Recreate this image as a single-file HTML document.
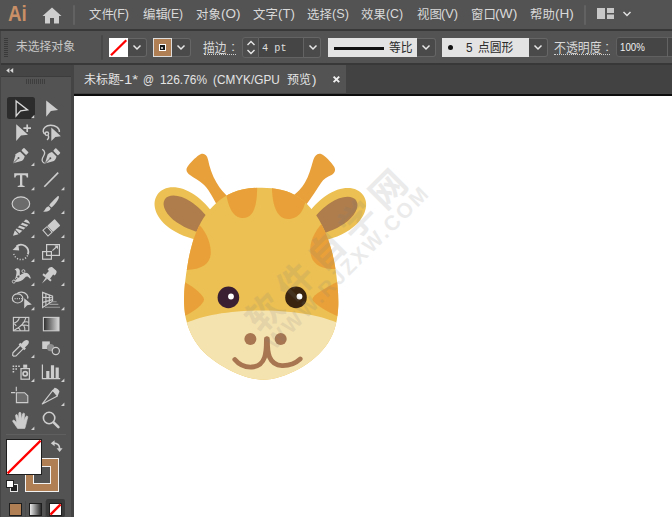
<!DOCTYPE html>
<html lang="zh"><head><meta charset="utf-8"><title>Adobe Illustrator</title>
<style>
html,body{margin:0;padding:0;background:#fff;}
body{width:672px;height:517px;overflow:hidden;position:relative;font-family:"Liberation Sans",sans-serif;}
#app{position:absolute;left:0;top:0;width:672px;height:517px;overflow:hidden;background:#fff;}
#app div,#app span,#app svg{position:absolute;}
.t{white-space:pre;}
.g{overflow:visible;}
.g text{font-family:"Liberation Sans","Noto Sans CJK SC",sans-serif;}
.bar{background:#535353;}
.dark{background:#383838;}
.dd{background:#4a4a4a;border:1px solid #666;border-left:none;border-radius:0 3px 3px 0;box-sizing:border-box;}
</style></head>
<body>
<div id="app">
 <!-- canvas -->
 <div style="left:74px;top:95.8px;width:598px;height:422px;background:#fff"></div>
 <!-- menu bar -->
 <div class="bar" style="left:0;top:0;width:672px;height:30px"></div>
 <div class="dark" style="left:0;top:29px;width:672px;height:2px"></div>
 <!-- control bar -->
 <div class="bar" style="left:0;top:31px;width:672px;height:32px"></div>
 <div class="dark" style="left:0;top:63px;width:672px;height:2px"></div>
 <!-- tab bar -->
 <div style="left:72px;top:65px;width:600px;height:28px;background:#424242"></div>
 <div class="bar" style="left:74px;top:65px;width:272px;height:28px"></div>
 <div class="dark" style="left:72px;top:93px;width:600px;height:1.5px;background:#444"></div><div class="dark" style="left:74px;top:94.4px;width:598px;height:1.5px;background:#0c0c0c"></div>
 <!-- toolbar -->
 <div class="bar" style="left:0;top:65px;width:71px;height:452px"></div>
 <div style="left:0;top:65px;width:71px;height:11px;background:#454545"></div>
 <div class="dark" style="left:0;top:76px;width:71px;height:1px;background:#3c3c3c"></div>
 <div class="dark" style="left:71px;top:65px;width:3px;height:452px;background:#444"></div>
 <div class="dark" style="left:0;top:31px;width:1px;height:486px;background:#444"></div>

 <!-- Ai logo + home -->
 <span class="t" style="left:8.2px;top:1.8px;font-size:21.4px;line-height:24.6px;color:#c98f66;font-weight:bold;transform:scaleX(.88);transform-origin:0 0">Ai</span>
 <svg style="left:42px;top:7px" width="20" height="17" viewBox="0 0 20 17"><path fill="#cecece" d="M10 0.5 L19.5 9 L17 9 L17 16.5 L12 16.5 L12 11 L8 11 L8 16.5 L3 16.5 L3 9 L0.5 9 Z"/></svg>
 <div style="left:73.2px;top:4.8px;width:2px;height:20px;background:#626262;border-radius:1px"></div>
 <div style="left:584px;top:4.8px;width:2px;height:20px;background:#626262;border-radius:1px"></div>
 <!-- workspace switcher -->
 <svg style="left:597px;top:8px" width="36" height="12" viewBox="0 0 36 12"><path fill="#c8c8c8" d="M0 0h8v11h-8zM10 0h7v5h-7zM10 6.5h7v4.5h-7z"/><path fill="none" stroke="#e0e0e0" stroke-width="1.5" d="M26.5 4 L30 7.5 L33.5 4"/></svg>

 <!-- control bar widgets -->
 <svg style="left:4px;top:37px" width="5" height="22" viewBox="0 0 5 22"><path stroke="#3a3a3a" stroke-width="1" d="M0 1.5h4M0 3.5h4M0 5.5h4M0 7.5h4M0 9.5h4M0 11.5h4M0 13.5h4M0 15.5h4M0 17.5h4M0 19.5h4"/></svg>
 <div style="left:101px;top:35px;width:2px;height:24.6px;background:#484848;border-radius:1px"></div>
 <!-- fill swatch -->
 <div style="left:108.9px;top:38px;width:19.1px;height:19px;background:#fff"></div>
 <svg style="left:109px;top:38px" width="19" height="19" viewBox="0 0 19 19"><path stroke="#f00" stroke-width="2.3" d="M2 17.3 L17.3 2.2"/></svg>
 <div class="dd" style="left:128px;top:38px;width:19px;height:19px"></div>
 <svg style="left:132px;top:44px" width="10" height="7" viewBox="0 0 10 7"><path fill="none" stroke="#e8e8e8" stroke-width="1.5" d="M1.5 1.5 L5 5 L8.5 1.5"/></svg>
 <!-- stroke swatch -->
 <div style="left:153px;top:38px;width:19px;height:19px;background:#b07f54;border:1px solid #ddd;box-sizing:border-box"></div>
 <div style="left:159px;top:44.4px;width:6.6px;height:6.6px;background:#1a1a1a;border:1.1px solid #fff;box-sizing:border-box"></div><div style="left:161.3px;top:46.7px;width:2px;height:2px;background:#bbb"></div>
 <div class="dd" style="left:172px;top:38px;width:19px;height:19px"></div>
 <svg style="left:176px;top:44px" width="10" height="7" viewBox="0 0 10 7"><path fill="none" stroke="#e8e8e8" stroke-width="1.5" d="M1.5 1.5 L5 5 L8.5 1.5"/></svg>
 <!-- stroke label underline -->
 <div style="left:203.5px;top:53.6px;width:32px;height:0;border-top:1px dotted #d0d0d0"></div>
 <!-- spinner -->
 <div style="left:241.6px;top:37px;width:17.6px;height:20.5px;border:1px solid #636363;border-radius:3px 0 0 3px;box-sizing:border-box;background:#4d4d4d"></div>
 <svg style="left:245.6px;top:40px" width="10" height="15" viewBox="0 0 10 15"><path fill="none" stroke="#e8e8e8" stroke-width="1.4" d="M1.5 5 L5 1.5 L8.5 5M1.5 10 L5 13.5 L8.5 10"/></svg>
 <div style="left:259.2px;top:37px;width:44.8px;height:20.5px;background:#454545;border:1px solid #636363;border-left:none;box-sizing:border-box"></div>
 <div class="dd" style="left:304px;top:37px;width:17px;height:20.5px"></div>
 <svg style="left:308px;top:44px" width="10" height="7" viewBox="0 0 10 7"><path fill="none" stroke="#e8e8e8" stroke-width="1.5" d="M1.5 1.5 L5 5 L8.5 1.5"/></svg>
 <!-- stroke profile -->
 <div style="left:328px;top:38px;width:89px;height:19px;background:#e3e3e3"></div>
 <div style="left:333.8px;top:47px;width:50.6px;height:2.6px;background:#111"></div>
 <div class="dd" style="left:417px;top:38px;width:19px;height:19px"></div>
 <svg style="left:421px;top:44px" width="10" height="7" viewBox="0 0 10 7"><path fill="none" stroke="#e8e8e8" stroke-width="1.5" d="M1.5 1.5 L5 5 L8.5 1.5"/></svg>
 <!-- brush -->
 <div style="left:442px;top:38px;width:87px;height:19px;background:#e3e3e3"></div>
 <div style="left:448px;top:45px;width:5px;height:5px;border-radius:50%;background:#111"></div>
 <div class="dd" style="left:529px;top:38px;width:19px;height:19px"></div>
 <svg style="left:533px;top:44px" width="10" height="7" viewBox="0 0 10 7"><path fill="none" stroke="#e8e8e8" stroke-width="1.5" d="M1.5 1.5 L5 5 L8.5 1.5"/></svg>
 <!-- opacity -->
 <div style="left:554px;top:53.6px;width:56px;height:0;border-top:1px dotted #d0d0d0"></div>
 <div style="left:616.2px;top:37px;width:60px;height:20.4px;background:#454545;border:1px solid #606060;border-radius:3px;box-sizing:border-box"></div>
 <div style="left:667px;top:38px;width:1px;height:19px;background:#636363"></div>

 <!-- tab close -->
 <svg style="left:332px;top:75px" width="9" height="9" viewBox="0 0 9 9"><path stroke="#f0f0f0" stroke-width="1.9" d="M1.6 1.6 L7.2 7.2 M7.2 1.6 L1.6 7.2"/></svg>

 <!-- toolbar header -->
 <svg style="left:6px;top:67px" width="8" height="7" viewBox="0 0 8 7"><path fill="#d8d8d8" d="M3.4 1 L3.4 6 L0.2 3.5Z M7.2 1 L7.2 6 L4 3.5Z"/></svg>
 <svg style="left:26px;top:79px" width="20" height="6" viewBox="0 0 20 6"><path stroke="#3e3e3e" stroke-width="1" d="M0.5 0v5M2.5 0v5M4.5 0v5M6.5 0v5M8.5 0v5M10.5 0v5M12.5 0v5M14.5 0v5M16.5 0v5M18.5 0v5"/></svg>

 <svg style="left:0;top:65px" width="71" height="452" viewBox="0 65 71 452">
  <defs>
   <linearGradient id="gr1" x1="0" x2="1" y1="0" y2="0"><stop offset="0" stop-color="#2b2b2b"/><stop offset="1" stop-color="#dcdcdc"/></linearGradient>
   <linearGradient id="gr2" x1="0" x2="1" y1="0" y2="0"><stop offset="0" stop-color="#f4f4f4"/><stop offset="1" stop-color="#222"/></linearGradient>
   <path id="ct" d="M3.4 0 L3.4 3.4 L0 3.4Z" fill="#cfcfcf"/>
  </defs>
  <g fill="#cdcdcd" stroke="none">
  <!-- row1 -->
  <rect x="7" y="97" width="28" height="22" rx="2.5" fill="#2c2c2c"/>
  <path d="M16.1 100.9 L27.6 109.9 L20.6 110.9 L16.1 116 Z" fill="none" stroke="#dadada" stroke-width="1.3" stroke-linejoin="miter"/>
  <use href="#ct" x="31" y="114.8"/>
  <path d="M46.2 100.4 L58.1 110 L50.9 111 L46.2 116.7Z"/>
  <!-- row2 -->
  <path d="M16.2 124.3 L28 134.8 L21 135.6 L16.2 141Z"/>
  <path d="M27.2 124.4 v7.6 M23.4 128.2 h7.6" stroke="#cdcdcd" stroke-width="1.7" fill="none"/>
  <g fill="none" stroke="#cdcdcd" stroke-width="1.4">
   <path d="M59.4 132 C59.8 128 55.6 125.2 50.6 125.2 C45.8 125.2 42.8 128.4 43.2 131.4 C43.4 132.8 44.2 133.6 45.2 133.8"/>
   <circle cx="46.9" cy="133.7" r="1.7"/>
   <path d="M48 135.2 C49 137 48.6 138.8 47 139.8"/>
  </g>
  <path d="M51.3 127.4 L60.9 136.2 L55.4 136.9 L51.3 141Z"/>
  <!-- row3 pens -->
  <g id="pen" transform="translate(13.2 163.3) rotate(45) scale(0.99)">
   <path d="M0 0 L-4.6 -8.2 C-4.9 -10.5 -3.6 -12.6 -3.2 -13.2 L3.2 -13.2 C3.6 -12.6 4.9 -10.5 4.6 -8.2Z"/>
   <path d="M0 -0.5 L0 -7" stroke="#535353" stroke-width="0.9"/>
   <circle cx="0" cy="-7.6" r="1.0" fill="#535353"/>
   <rect x="-3.4" y="-18.8" width="6.8" height="3.8" rx="0.8"/>
  </g>
  <use href="#ct" x="31" y="162.6"/>
  <use href="#pen" x="0" y="0" transform="translate(31.8 0.3)"/>
  <path d="M42.2 149.2 C45 151 45.2 153.5 43.6 156 C41.6 159 41.2 162 44.6 163.4" fill="none" stroke="#cdcdcd" stroke-width="1.3"/>
  <!-- row4 T, line -->
  <path d="M14.2 173.2 H28.1 V177.6 H26.7 C26.5 176 26 175.3 24.6 175.3 H22.3 V184.6 C22.3 185.6 22.9 185.9 24.6 185.9 V187 H17.7 V185.9 C19.4 185.9 20 185.6 20 184.6 V175.3 H17.7 C16.3 175.3 15.8 176 15.6 177.6 H14.2Z"/>
  <use href="#ct" x="31" y="186.8"/>
  <path d="M44.3 186.8 L58.2 172.6" stroke="#cdcdcd" stroke-width="1.6" fill="none"/>
  <use href="#ct" x="61" y="186.8"/>
  <!-- row5 ellipse, brush -->
  <ellipse cx="20.9" cy="203.8" rx="8.8" ry="6.9" fill="#6c6c6c" stroke="#d2d2d2" stroke-width="1.1"/>
  <use href="#ct" x="31" y="210.6"/>
  <path d="M58.6 196 C59.6 197 58.4 199.6 56.4 202.2 C54.6 204.6 52.6 206.8 51.4 207.6 L49.2 205.4 C50 204 52 201.8 54.2 199.6 C56.4 197.4 57.8 195.4 58.6 196Z"/>
  <path d="M48.6 206.2 L50.6 208.2 C50.4 210.6 48 211.9 43 211.6 C45.2 210.4 45.4 207.2 48.6 206.2Z"/>
  <use href="#ct" x="61" y="210.6"/>
  <!-- row6 pencil, eraser -->
  <g transform="translate(13 235.8) rotate(-44)">
   <path d="M0 0 L5.2 -2.7 L5.2 2.7Z"/>
   <path d="M6.2 -2.8 L20.4 -2.8 C21.6 -2.8 21.8 2.8 20.4 2.8 L6.2 2.8Z"/>
   <path d="M8.2 -3.2 L11.2 3.2 M12.4 -3.2 L15.4 3.2 M16.6 -3.2 L19.6 3.2" stroke="#535353" stroke-width="1.5" fill="none"/>
  </g>
  <use href="#ct" x="31" y="234.6"/>
  <g transform="translate(51.6 227.6) rotate(-42) scale(0.86)">
   <rect x="-2.2" y="-5" width="11.4" height="10" rx="0.8"/>
   <rect x="-9.6" y="-4.4" width="6.4" height="8.8" fill="none" stroke="#cdcdcd" stroke-width="1.2"/>
  </g>
  <use href="#ct" x="61" y="234.6"/>
  <!-- row7 rotate, scale -->
  <path d="M16.4 246.4 A7.3 7.3 0 0 1 27.9 254.4" fill="none" stroke="#cdcdcd" stroke-width="1.8"/>
  <path d="M27.6 255.4 A7.3 7.3 0 0 1 13.8 253.6" fill="none" stroke="#cdcdcd" stroke-width="1.5" stroke-dasharray="1.1 1.7"/>
  <path d="M12.6 249.9 L18.2 244.4 L19.2 250.6Z"/>
  <use href="#ct" x="31" y="258.6"/>
  <g fill="none" stroke="#cdcdcd" stroke-width="1.2">
   <rect x="46.6" y="244.6" width="12.8" height="10.8"/>
   <rect x="42.6" y="251.6" width="8.8" height="7.6"/>
   <path d="M52.4 250.6 L57.2 246.2"/>
  </g>
  <path d="M54.4 245.6 H58 V249.2Z"/>
  <use href="#ct" x="61" y="258.6"/>
  <!-- row8 width, pin -->
  <path d="M13.6 282 C15.2 279.6 16 276.6 16.4 273.4 C16.8 270.6 15.8 269.4 14.4 270.2 C17 266.6 20.6 268.6 19.8 272.4 C19.4 274.6 20.6 275.2 22.6 273.8 C25.6 271.8 29.2 272.6 30.6 277.6 C30.8 278.6 30.2 279 29.6 278.2 C27.8 276 26.2 276.2 24.6 278 C22.4 280.6 18.6 282.4 13.6 282Z"/>
  <path d="M13.6 281.8 L23.4 271.2" stroke="#535353" stroke-width="1" fill="none"/>
  <circle cx="13.8" cy="281.6" r="1.5" fill="#535353" stroke="#cdcdcd" stroke-width="0.9"/>
  <circle cx="18.4" cy="276.6" r="1.5" fill="#535353" stroke="#cdcdcd" stroke-width="0.9"/>
  <circle cx="23.4" cy="271.2" r="1.5" fill="#535353" stroke="#cdcdcd" stroke-width="0.9"/>
  <use href="#ct" x="31" y="282.6"/>
  <g transform="translate(41.9 283.6) rotate(-50)">
   <path d="M0 0 L7.2 -1 L7.2 1Z"/>
   <path d="M7 -5.2 L9 -5.2 L9 -3 L14.2 -2.8 L14.4 -4.6 C17.4 -5 19.2 -3.6 19.2 -2.4 L19.2 2.4 C19.2 3.6 17.4 5 14.4 4.6 L14.2 2.8 L9 3 L9 5.2 L7 5.2Z"/>
  </g>
  <use href="#ct" x="61" y="282.6"/>
  <!-- row9 shape builder, perspective -->
  <g fill="none" stroke="#cdcdcd" stroke-width="1.2">
   <ellipse cx="17.6" cy="298.4" rx="5.2" ry="4.6"/>
   <path d="M17 293.6 C19 291.6 24.4 291.4 26.8 294.6 C28 296.2 28 297.6 27.6 298.6"/>
   <path d="M14.6 298.6 H22.6" stroke-dasharray="1 1.2"/>
  </g>
  <path d="M24.2 298.2 L31.8 304.6 L27.2 305.2 L24.2 308.6Z"/>
  <use href="#ct" x="31" y="306.8"/>
  <g fill="none" stroke="#cdcdcd" stroke-width="1.1">
   <path d="M42.6 292.4 V307.4 L52.6 301.2 L52.6 296.2Z"/>
   <path d="M45.9 293.7 V305.3 M49.3 295 V303.2 M42.6 297.4 L52.6 297.8 M42.6 302.4 L52.6 299.6"/>
  </g>
  <path d="M52 301.8 H56.6 M49.4 304.4 H58.4 M45 307.2 H60" stroke="#9a9a9a" stroke-width="1.1" fill="none"/>
  <use href="#ct" x="61" y="306.8"/>
  <!-- row10 mesh, gradient -->
  <g fill="none" stroke="#cdcdcd" stroke-width="1.1">
   <rect x="13.4" y="317.4" width="15.4" height="13.4"/>
   <path d="M13.4 323.4 C16.5 322.6 18.8 320.4 19.4 317.4 M13.6 330.4 C19 328 24.5 323.5 26 317.4 M20 325.8 C23 324.6 26 324.8 28.8 326 M17.8 327.4 C19.4 328.4 20.2 329.6 20.4 330.8 M22.8 322.8 C24.6 321.8 27 321.6 28.8 322.2 M23.6 325.2 C24.8 327 25 329 24.8 330.8 M16.2 326 C15.6 324.8 14.6 324 13.4 323.8"/>
  </g>
  <rect x="43.4" y="317.4" width="15.6" height="13.4" fill="url(#gr1)" stroke="#cdcdcd" stroke-width="1.1"/>
  <!-- row11 eyedropper, blend -->
  <g transform="translate(12.8 356) rotate(-45)">
   <path d="M0.4 -0.6 L2.4 -2.2 L13.4 -2.2 L13.4 2.2 L2.4 2.2 L0.4 0.6Z" fill="#535353" stroke="#cdcdcd" stroke-width="1.2" stroke-linejoin="round"/>
   <path d="M12.2 -4 H14.6 V-2.6 H16.4 C19.2 -3.2 21.8 -2 21.8 0 C21.8 2 19.2 3.2 16.4 2.6 H14.6 V4 H12.2Z"/>
  </g>
  <use href="#ct" x="31" y="354.6"/>
  <rect x="42.2" y="341.4" width="7.6" height="7.6"/>
  <circle cx="50.6" cy="347.6" r="3.7" fill="#8c8c8c"/>
  <circle cx="55.8" cy="351" r="3.6" fill="#535353" stroke="#cdcdcd" stroke-width="1.2"/>
  <!-- row12 symbol sprayer, graph -->
  <rect x="21" y="368.6" width="8.4" height="10.6" fill="none" stroke="#cdcdcd" stroke-width="1.2"/>
  <circle cx="25.2" cy="373.8" r="3"/><circle cx="25.2" cy="373.8" r="1.3" fill="#535353"/>
  <rect x="23.2" y="364.6" width="4" height="3.2"/>
  <path d="M12.6 365.4 h1.6 v1.6 h-1.6z M15.4 365.4 h1.6 v1.6 h-1.6z M18.2 365.4 h1.6 v1.6 h-1.6z M12.6 368.2 h1.6 v1.6 h-1.6z M15.4 368.2 h1.6 v1.6 h-1.6z M12.6 371 h1.6 v1.6 h-1.6z"/>
  <use href="#ct" x="31" y="378.6"/>
  <path d="M42.4 364.4 V378.6 H60.2" fill="none" stroke="#cdcdcd" stroke-width="1.2"/>
  <path d="M46.2 371 h3.2 v7 h-3.2z M50.9 365.2 h3.2 v12.8 h-3.2z M55.6 367.4 h3.2 v10.6 h-3.2z"/>
  <use href="#ct" x="61" y="378.6"/>
  <!-- row13 artboard, slice -->
  <path d="M16.4 392.7 H24.6 L27.8 395.8 V402.6 H16.4Z" fill="#6c6c6c" stroke="#cdcdcd" stroke-width="1.1"/>
  <path d="M16.3 386.8 V391.2 M11 392.6 H15.3" stroke="#cdcdcd" stroke-width="1.1" fill="none"/>
  <path d="M42.3 403.9 L52.8 390.4 L57.4 396Z" fill="none" stroke="#cdcdcd" stroke-width="1.1" stroke-linejoin="round"/>
  <path d="M52.4 390.4 L54.6 387.8 C55.6 387 60 390.4 59.4 391.8 L57.6 396.2Z"/>
  <use href="#ct" x="61" y="402.6"/>
  <!-- row14 hand, zoom -->
  <path d="M17.6 428.4 C15.8 426 14.2 423.4 12.8 421.6 C12.2 420.4 13.6 419.6 14.6 420.6 L16.8 423 L15.6 415.8 C15.4 414.4 17.2 414 17.6 415.4 L18.8 419.6 L18.8 413.4 C18.8 412 20.8 412 20.9 413.4 L21.3 419.4 L22.6 414 C23 412.6 24.8 413 24.6 414.4 L23.9 420.2 L25.9 416.6 C26.6 415.4 28.2 416.2 27.7 417.6 C26.8 420.4 26.2 424 24.8 428.4Z" stroke="#cdcdcd" stroke-width="0.7" stroke-linejoin="round"/>
  <use href="#ct" x="31" y="426.6"/>
  <circle cx="49.1" cy="418" r="5.7" fill="none" stroke="#cdcdcd" stroke-width="1.6"/>
  <path d="M53.6 422.4 L58.4 427.2" stroke="#cdcdcd" stroke-width="2.6" stroke-linecap="round" fill="none"/>
  </g>
  <!-- separator -->
  <path d="M6 434.5 H66" stroke="#5f5f5f" stroke-width="1"/>
  <!-- fill / stroke swatches -->
  <rect x="25.5" y="458.5" width="33" height="33" fill="#b07f54" stroke="#f2f2f2" stroke-width="1"/>
  <rect x="33.5" y="466.5" width="17" height="17" fill="#535353" stroke="#f2f2f2" stroke-width="1"/>
  <rect x="6.5" y="439.5" width="35" height="35" fill="#fff" stroke="#1e1e1e" stroke-width="1"/>
  <path d="M7.6 473.4 L40.6 440.6" stroke="#f00" stroke-width="2.2"/>
  <!-- swap arrow -->
  <path d="M53.2 443.2 C57.6 443 59.8 445.4 59.6 449" fill="none" stroke="#cdcdcd" stroke-width="1.7"/>
  <path d="M50.8 443.2 L54.6 440.2 V446.2Z M59.6 452 L56.6 448.2 H62.6Z" fill="#cdcdcd"/>
  <!-- default fill/stroke -->
  <rect x="10.5" y="484.5" width="7" height="7" fill="#222" stroke="#e8e8e8" stroke-width="1"/>
  <rect x="6.5" y="480.5" width="7" height="7" fill="#fff" stroke="#222" stroke-width="1"/>
  <!-- bottom buttons -->
  <rect x="46" y="499" width="19" height="18" rx="2" fill="#3a3a3a"/>
  <path d="M25.5 501 V517 M45.5 501 V517" stroke="#4a4a4a" stroke-width="1"/>
  <rect x="9.5" y="503.5" width="12" height="12" fill="#b07f54" stroke="#1e1e1e"/>
  <rect x="29.5" y="503.5" width="12" height="12" fill="url(#gr2)" stroke="#1e1e1e"/>
  <rect x="49.5" y="503.5" width="12" height="12" fill="#fff" stroke="#1e1e1e"/>
  <path d="M50.4 514.6 L60.6 504.4" stroke="#f00" stroke-width="2.4"/>
 </svg>

 <svg style="left:74px;top:95px" width="598" height="422" viewBox="74 95 598 422">
  <defs><clipPath id="hd"><path id="hp" d="M262.0 187.7 C268.7 187.8 275.4 188.3 281.8 189.9 C288.1 191.4 294.1 193.9 299.4 197.7 C304.8 201.4 309.5 206.2 313.5 211.5 C317.5 216.8 320.9 222.7 323.7 228.7 C326.5 234.7 328.8 240.8 330.6 247.1 C332.5 253.3 333.9 259.6 335.0 266.0 C336.1 272.4 336.9 278.9 337.5 285.6 C338.1 292.2 338.5 299.0 338.3 305.7 C338.0 312.3 337.3 318.9 335.7 325.1 C334.1 331.4 331.6 337.3 328.1 342.8 C324.6 348.2 320.1 353.2 315.1 357.6 C310.1 362.0 304.5 365.9 298.7 369.1 C292.8 372.3 286.7 374.9 280.4 376.8 C274.1 378.8 267.6 380.0 261.2 379.7 C254.8 379.4 248.4 377.8 242.1 375.6 C235.9 373.3 229.9 370.5 224.1 367.1 C218.3 363.8 212.8 360.1 207.8 355.8 C202.9 351.5 198.5 346.5 195.0 340.9 C191.5 335.3 188.8 329.1 187.0 322.9 C185.2 316.6 184.4 310.2 184.1 303.7 C183.8 297.2 184.2 290.5 184.9 283.9 C185.6 277.3 186.5 270.7 187.7 264.2 C188.8 257.6 190.1 251.2 191.9 244.9 C193.6 238.6 195.8 232.5 198.7 226.7 C201.6 220.8 205.1 215.1 209.4 210.0 C213.7 204.9 218.6 200.4 224.2 196.9 C229.7 193.4 235.8 191.1 242.2 189.6 C248.6 188.2 255.3 187.7 262.0 187.7Z"/></clipPath></defs>
  <!-- horns -->
  <path fill="#e8a03a" d="M222 214 L217 205 C212 196 208 188 203 184 C199 180.5 194 178 190 175 C186 172 185.5 169 188 166 C192 161 197 156 200.5 154.3 C204 152.8 207 155 208 159.5 C209.5 167 212 175 216.6 182.7 C220 188.5 224 193 229 198 L236 206Z"/>
  <path fill="#e8a03a" d="M284 206 L290 198 C297 193 302 188 305 182.5 C309 175.5 311 168 313 161 C314.5 156 317 153 320.5 153.8 C325 155.5 331 162 334 166.5 C336 170 335 173 331.5 175 C327 177 323.5 179 321 183 C317 189 312 197 306 205 L300 214Z"/>
  <!-- ears -->
  <g transform="translate(187.8 215.4) rotate(34)"><path d="M-36.8 0 C-36.8 -11.8 -24 -20.8 -6 -20.8 C12 -20.8 36.5 -11.6 36.5 0 C36.5 11.6 12 20.8 -6 20.8 C-24 20.8 -36.8 11.8 -36.8 0Z" fill="#ecc052"/><path d="M-28 -0.5 C-28 -7.6 -18 -13 -5 -13 C9 -13 29 -7.6 29 -0.5 C29 6.6 9 12 -5 12 C-18 12 -28 6.6 -28 -0.5Z" fill="#ae7d4b"/></g>
  <g transform="translate(332.9 216.0) scale(-1 1) rotate(34)"><path d="M-36.8 0 C-36.8 -11.8 -24 -20.8 -6 -20.8 C12 -20.8 36.5 -11.6 36.5 0 C36.5 11.6 12 20.8 -6 20.8 C-24 20.8 -36.8 11.8 -36.8 0Z" fill="#ecc052"/><path d="M-28 -0.5 C-28 -7.6 -18 -13 -5 -13 C9 -13 29 -7.6 29 -0.5 C29 6.6 9 12 -5 12 C-18 12 -28 6.6 -28 -0.5Z" transform="translate(0 0.6)" fill="#ae7d4b"/></g>
  <!-- head -->
  <use href="#hp" fill="#ecc052"/>
  <g clip-path="url(#hd)">
   <path fill="#e9a038" d="M225 180 C226 205 232 218 243 218 C254 218 258 205 257 180Z"/>
   <path fill="#e9a038" d="M272 180 C271 205 277 219 288 219 C299 219 306 210 307 190Z"/>
   <path fill="#e9a038" d="M196 222 C205 229 210.5 241 210.8 252 C211 263 203 269.5 186 270 L178 270 L178 222Z"/>
   <path fill="#e9a038" d="M327 219 C317 227 310 239 310.2 250 C310.5 261 317 268 331 269 L346 269 L346 219Z"/>
   <path fill="#e9a038" d="M180 280 C192 285 204 295.5 204 299.5 C204 304 193 313 180 318Z"/>
   <path fill="#e9a038" d="M342 280 C330 285 312.5 295 312.5 299 C312.5 303.5 329 313 342 318Z"/>
   <path fill="#f5e3af" d="M180 325.2 L184 324 C198 317 224 310.5 262 310.4 C300 310.5 326 317 340 324 L344 325.2 L344 385 L180 385Z"/>
  </g>
  <circle cx="228.4" cy="297.4" r="10.8" fill="#3a1e32"/><circle cx="231" cy="296.5" r="2.9" fill="#fff"/>
  <circle cx="296" cy="297.4" r="10.8" fill="#3a2410"/><circle cx="299.5" cy="296.5" r="2.9" fill="#fff"/>
  <circle cx="250.4" cy="339" r="6" fill="#a87650"/><circle cx="280.7" cy="339" r="6" fill="#a87650"/>
  <path fill="none" stroke="#a87650" stroke-width="4.8" stroke-linecap="round" stroke-linejoin="round" d="M266.4 339 C266.4 345 266.6 352 264.5 357.5 C262.5 363 258 366.6 252 367 C245 367.4 239 364.6 234.8 359.5 M267.4 339 C267.4 345 267.3 352 269.5 357 C271.8 362.4 276 365.4 282 365.6 C289 365.8 295.5 363.4 300.2 359"/>
  <!-- watermark -->
  <g transform="translate(261 334.5) rotate(-45)" fill="#808080" opacity="0.15">
   <text x="0" y="0" font-family="Liberation Sans, Noto Sans CJK SC, sans-serif" font-weight="bold" font-size="36" letter-spacing="7.7">软件自学网</text>
   <text x="-1.5" y="21" font-family="Liberation Sans, sans-serif" font-weight="bold" font-size="21" letter-spacing="2.3">WWW.RJZXW.COM</text>
  </g>
 </svg>

<svg class="g" aria-label="文件" style="left:89.25px;top:5.26px" width="26.8" height="17.4" viewBox="0 -13.64 26.8 17.4"><text x="0" y="0" font-size="12.4" fill="#d9d9d9">文件</text></svg>
<span class="t" style="left:113.40px;top:6.35px;font-size:13.2px;line-height:15.17px;color:#d9d9d9;font-family:'Liberation Sans',sans-serif;transform:scaleX(0.9493);transform-origin:0 0">(F)</span>
<svg class="g" aria-label="编辑" style="left:142.64999999999998px;top:5.26px" width="26.8" height="17.4" viewBox="0 -13.64 26.8 17.4"><text x="0" y="0" font-size="12.4" fill="#d9d9d9">编辑</text></svg>
<span class="t" style="left:166.80px;top:6.35px;font-size:13.2px;line-height:15.17px;color:#d9d9d9;font-family:'Liberation Sans',sans-serif;transform:scaleX(0.9150);transform-origin:0 0">(E)</span>
<svg class="g" aria-label="对象" style="left:196.14999999999998px;top:5.26px" width="26.8" height="17.4" viewBox="0 -13.64 26.8 17.4"><text x="0" y="0" font-size="12.4" fill="#d9d9d9">对象</text></svg>
<span class="t" style="left:220.90px;top:6.35px;font-size:13.2px;line-height:15.17px;color:#d9d9d9;font-family:'Liberation Sans',sans-serif;transform:scaleX(1.0231);transform-origin:0 0">(O)</span>
<svg class="g" aria-label="文字" style="left:253.45px;top:5.26px" width="26.8" height="17.4" viewBox="0 -13.64 26.8 17.4"><text x="0" y="0" font-size="12.4" fill="#d9d9d9">文字</text></svg>
<span class="t" style="left:277.70px;top:6.35px;font-size:13.2px;line-height:15.17px;color:#d9d9d9;font-family:'Liberation Sans',sans-serif;transform:scaleX(0.9968);transform-origin:0 0">(T)</span>
<svg class="g" aria-label="选择" style="left:307.25px;top:5.26px" width="26.8" height="17.4" viewBox="0 -13.64 26.8 17.4"><text x="0" y="0" font-size="12.4" fill="#d9d9d9">选择</text></svg>
<span class="t" style="left:331.80px;top:6.35px;font-size:13.2px;line-height:15.17px;color:#d9d9d9;font-family:'Liberation Sans',sans-serif;transform:scaleX(0.9605);transform-origin:0 0">(S)</span>
<svg class="g" aria-label="效果" style="left:361.45px;top:5.26px" width="26.8" height="17.4" viewBox="0 -13.64 26.8 17.4"><text x="0" y="0" font-size="12.4" fill="#d9d9d9">效果</text></svg>
<span class="t" style="left:386.20px;top:6.35px;font-size:13.2px;line-height:15.17px;color:#d9d9d9;font-family:'Liberation Sans',sans-serif;transform:scaleX(0.9387);transform-origin:0 0">(C)</span>
<svg class="g" aria-label="视图" style="left:416.65px;top:5.26px" width="26.8" height="17.4" viewBox="0 -13.64 26.8 17.4"><text x="0" y="0" font-size="12.4" fill="#d9d9d9">视图</text></svg>
<span class="t" style="left:441.00px;top:6.35px;font-size:13.2px;line-height:15.17px;color:#d9d9d9;font-family:'Liberation Sans',sans-serif;transform:scaleX(0.9718);transform-origin:0 0">(V)</span>
<svg class="g" aria-label="窗口" style="left:471.45px;top:5.26px" width="26.8" height="17.4" viewBox="0 -13.64 26.8 17.4"><text x="0" y="0" font-size="12.4" fill="#d9d9d9">窗口</text></svg>
<span class="t" style="left:495.40px;top:6.35px;font-size:13.2px;line-height:15.17px;color:#d9d9d9;font-family:'Liberation Sans',sans-serif;transform:scaleX(1.0494);transform-origin:0 0">(W)</span>
<svg class="g" aria-label="帮助" style="left:530.45px;top:5.26px" width="26.8" height="17.4" viewBox="0 -13.64 26.8 17.4"><text x="0" y="0" font-size="12.4" fill="#d9d9d9">帮助</text></svg>
<span class="t" style="left:554.60px;top:6.35px;font-size:13.2px;line-height:15.17px;color:#d9d9d9;font-family:'Liberation Sans',sans-serif;transform:scaleX(1.0314);transform-origin:0 0">(H)</span>
<svg class="g" aria-label="未选择对象" style="left:15.6px;top:38.32px" width="61.0" height="16.5" viewBox="0 -12.98 61.0 16.5"><text x="0" y="0" font-size="11.8" fill="#c6c6c6" transform="scale(1 1.03)">未选择对象</text></svg>
<svg class="g" aria-label="描边" style="left:203.4px;top:39.02px" width="25.6" height="16.5" viewBox="0 -12.98 25.6 16.5"><text x="0" y="0" font-size="11.8" fill="#d9d9d9" transform="scale(1 1.07)">描边</text></svg>
<span class="t" style="left:230.80px;top:40.23px;font-size:13px;line-height:14.94px;color:#d9d9d9;font-family:'Liberation Sans',sans-serif;transform:scaleX(1.1628);transform-origin:0 0">:</span>
<svg class="g" aria-label="等比" style="left:389.2px;top:39.42px" width="25.6" height="16.5" viewBox="0 -12.98 25.6 16.5"><text x="0" y="0" font-size="11.8" fill="#2a2a2a" transform="scale(1 1.05)">等比</text></svg>
<svg class="g" aria-label="点圆形" style="left:478.4px;top:39.42px" width="37.4" height="16.5" viewBox="0 -12.98 37.4 16.5"><text x="0" y="0" font-size="11.8" fill="#2a2a2a" transform="scale(1 1.05)">点圆形</text></svg>
<span class="t" style="left:465.60px;top:40.60px;font-size:12.6px;line-height:14.48px;color:#2a2a2a;font-family:'Liberation Sans',sans-serif;transform:scaleX(0.9418);transform-origin:0 0">5</span>
<svg class="g" aria-label="不透明度" style="left:554.0px;top:38.91px" width="49.6" height="16.7" viewBox="0 -13.09 49.6 16.7"><text x="0" y="0" font-size="11.9" fill="#d9d9d9" transform="scale(1 1.07)">不透明度</text></svg>
<span class="t" style="left:604.60px;top:40.23px;font-size:13px;line-height:14.94px;color:#d9d9d9;font-family:'Liberation Sans',sans-serif;transform:scaleX(1.1628);transform-origin:0 0">:</span>
<span class="t" style="left:620.00px;top:40.10px;font-size:11.6px;line-height:13.33px;color:#f0f0f0;font-family:'Liberation Sans',sans-serif;transform:scaleX(0.8359);transform-origin:0 0">100%</span>
<span class="t" style="left:262.00px;top:41.76px;font-size:11.2px;line-height:12.87px;color:#dedede;font-family:'Liberation Mono',monospace;transform:scaleX(0.9150);transform-origin:0 0">4 pt</span>
<svg class="g" aria-label="未标题" style="left:84.0px;top:71.10px" width="38.0" height="16.8" viewBox="0 -13.20 38.0 16.8"><text x="0" y="0" font-size="12" fill="#e4e4e4">未标题</text></svg>
<span class="t" style="left:119.40px;top:72.35px;font-size:13.2px;line-height:15.17px;color:#e4e4e4;font-family:'Liberation Sans',sans-serif;transform:scaleX(1.1260);transform-origin:0 0">-1*</span>
<span class="t" style="left:142.60px;top:72.35px;font-size:13.2px;line-height:15.17px;color:#e4e4e4;font-family:'Liberation Sans',sans-serif;transform:scaleX(0.8209);transform-origin:0 0">@</span>
<span class="t" style="left:160.00px;top:72.35px;font-size:13.2px;line-height:15.17px;color:#e4e4e4;font-family:'Liberation Sans',sans-serif;transform:scaleX(0.9019);transform-origin:0 0">126.76%</span>
<span class="t" style="left:213.40px;top:72.35px;font-size:13.2px;line-height:15.17px;color:#e4e4e4;font-family:'Liberation Sans',sans-serif;transform:scaleX(0.8930);transform-origin:0 0">(CMYK/GPU</span>
<svg class="g" aria-label="预览" style="left:287.2px;top:71.10px" width="26.0" height="16.8" viewBox="0 -13.20 26.0 16.8"><text x="0" y="0" font-size="12" fill="#e4e4e4">预览</text></svg>
<span class="t" style="left:311.60px;top:72.35px;font-size:13.2px;line-height:15.17px;color:#e4e4e4;font-family:'Liberation Sans',sans-serif;transform:scaleX(1.0010);transform-origin:0 0">)</span>
</div>
</body></html>
